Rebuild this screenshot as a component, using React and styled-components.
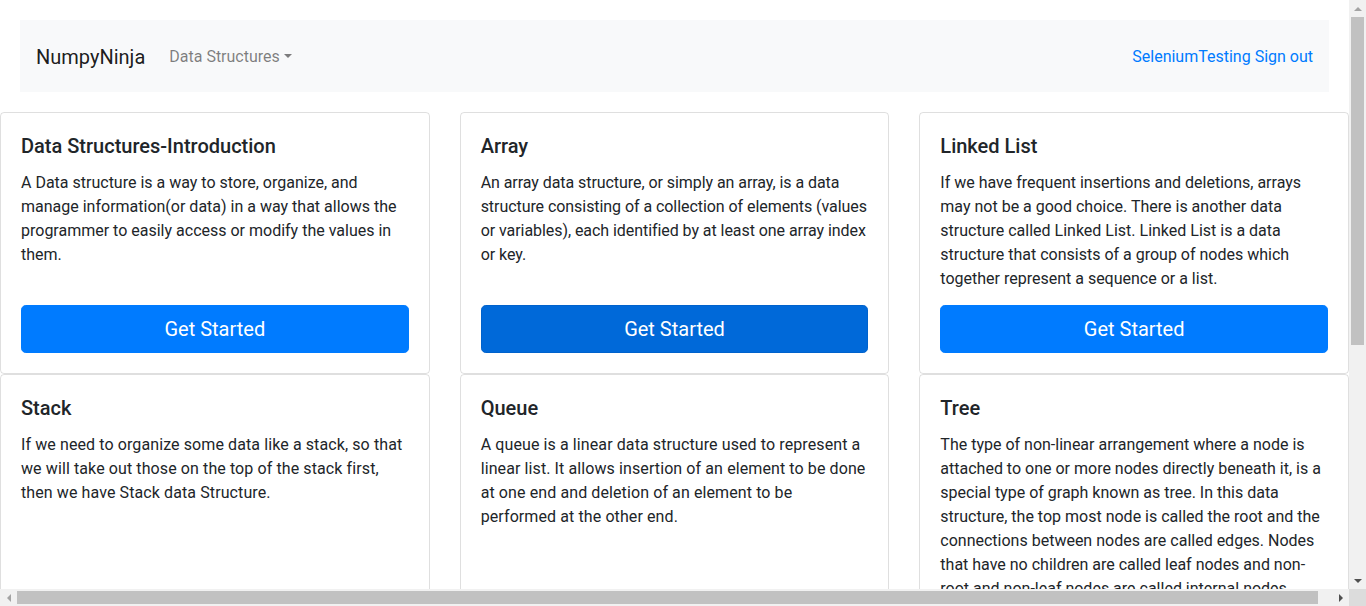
import { styled, createGlobalStyle } from "styled-components";

const Global = createGlobalStyle`
  html, body {
    margin: 0;
    overflow: hidden;
  }
  body {
    font-family: Roboto, "Liberation Sans", sans-serif;
    font-size: 16px;
    line-height: 1.5;
    color: #212529;
    background: #fff;
  }
`;

// spacing: small per-card letter-spacing so lines wrap as in the original font
const topics = [
  {
    title: "Data Structures-Introduction",
    text: "A Data structure is a way to store, organize, and manage information(or data) in a way that allows the programmer to easily access or modify the values in them.",
  },
  {
    title: "Array",
    text: "An array data structure, or simply an array, is a data structure consisting of a collection of elements (values or variables), each identified by at least one array index or key.",
    hover: true,
    spacing: -0.06,
  },
  {
    title: "Linked List",
    text: "If we have frequent insertions and deletions, arrays may not be a good choice. There is another data structure called Linked List. Linked List is a data structure that consists of a group of nodes which together represent a sequence or a list.",
  },
  {
    title: "Stack",
    text: "If we need to organize some data like a stack, so that we will take out those on the top of the stack first, then we have Stack data Structure.",
    spacing: 0.1,
  },
  {
    title: "Queue",
    text: "A queue is a linear data structure used to represent a linear list. It allows insertion of an element to be done at one end and deletion of an element to be performed at the other end.",
    spacing: 0.1,
  },
  {
    title: "Tree",
    text: "The type of non-linear arrangement where a node is attached to one or more nodes directly beneath it, is a special type of graph known as tree. In this data structure, the top most node is called the root and the connections between nodes are called edges. Nodes that have no children are called leaf nodes and non-root and non-leaf nodes are called internal nodes.",
  },
  {
    title: "Graph",
    text: "A graph is a nonlinear data structure that consists of vertices (nodes) and edges. The edges connect pairs of vertices and may be directed or undirected.",
  },
];

export default function App() {
  return (
    <>
      <Global />
      <Frame>
        <Viewport>
          <Navbar>
            <Brand>NumpyNinja</Brand>
            <Dropdown>Data Structures</Dropdown>
            <Right>
              <NavLink>SeleniumTesting</NavLink> <NavLink>Sign out</NavLink>
            </Right>
          </Navbar>
          <Grid>
            {topics.map((t) => (
              <Card key={t.title}>
                <Title>{t.title}</Title>
                <Text $spacing={t.spacing || 0}>{t.text}</Text>
                <Button $hover={t.hover}>Get Started</Button>
              </Card>
            ))}
          </Grid>
        </Viewport>
        <VBar>
          <ArrowBox>
            <Arrow $dir="up" />
          </ArrowBox>
          <VTrack>
            <VThumb />
          </VTrack>
          <ArrowBox>
            <Arrow $dir="down" $dark />
          </ArrowBox>
        </VBar>
        <HBar>
          <ArrowBox>
            <Arrow $dir="left" />
          </ArrowBox>
          <HTrack>
            <HThumb />
          </HTrack>
          <ArrowBox>
            <Arrow $dir="right" $dark />
          </ArrowBox>
        </HBar>
        <Corner />
      </Frame>
    </>
  );
}

const Frame = styled.div`
  width: 100vw;
  height: 100vh;
  display: grid;
  grid-template-columns: 1fr 17px;
  grid-template-rows: 1fr 17px;
`;

const Viewport = styled.div`
  overflow: hidden;
  min-width: 0;
  min-height: 0;
`;

const VBar = styled.div`
  background: #f1f1f1;
  display: flex;
  flex-direction: column;
`;

const HBar = styled.div`
  background: #f1f1f1;
  display: flex;
`;

const Corner = styled.div`
  background: #dcdcdc;
`;

const ArrowBox = styled.div`
  flex: 0 0 17px;
  width: 17px;
  height: 17px;
  display: flex;
  align-items: center;
  justify-content: center;
`;

const arrowColor = (p) => (p.$dark ? "#505050" : "#a3a3a3");

const Arrow = styled.span`
  width: 0;
  height: 0;
  ${(p) =>
    p.$dir === "up"
      ? `border-left: 4px solid transparent; border-right: 4px solid transparent; border-bottom: 4px solid ${arrowColor(p)};`
      : p.$dir === "down"
      ? `border-left: 4px solid transparent; border-right: 4px solid transparent; border-top: 4px solid ${arrowColor(p)};`
      : p.$dir === "left"
      ? `border-top: 4px solid transparent; border-bottom: 4px solid transparent; border-right: 4px solid ${arrowColor(p)};`
      : `border-top: 4px solid transparent; border-bottom: 4px solid transparent; border-left: 4px solid ${arrowColor(p)};`}
`;

const VTrack = styled.div`
  flex: 1;
  padding: 0 2px;
`;

const VThumb = styled.div`
  height: 328px;
  background: #c1c1c1;
`;

const HTrack = styled.div`
  flex: 1;
  padding: 2px 0;
`;

const HThumb = styled.div`
  width: 1301px;
  height: 100%;
  background: #c1c1c1;
`;

const Navbar = styled.nav`
  margin: 20px;
  padding: 16px;
  background: #f8f9fa;
  display: flex;
  align-items: center;
`;

const Brand = styled.a`
  font-size: 20px;
  line-height: 30px;
  padding: 6px 0 4px;
  margin-right: 16px;
  color: rgba(0, 0, 0, 0.9);
`;

const Dropdown = styled.a`
  padding: 9px 8px 7px;
  color: rgba(0, 0, 0, 0.5);
  &::after {
    content: "";
    display: inline-block;
    margin-left: 0.255em;
    vertical-align: 0.255em;
    border-top: 0.3em solid;
    border-right: 0.3em solid transparent;
    border-left: 0.3em solid transparent;
    border-bottom: 0;
  }
`;

const Right = styled.div`
  margin-left: auto;
  padding-top: 2px;
  color: #007bff;
`;

const NavLink = styled.a`
  color: #007bff;
`;

const Grid = styled.div`
  width: calc(100% + 15px);
  box-sizing: border-box;
  padding-right: 15px;
  display: grid;
  grid-template-columns: repeat(3, 1fr);
  column-gap: 30px;
  padding-bottom: 40px;
`;

const Card = styled.div`
  border: 1px solid rgba(0, 0, 0, 0.125);
  border-radius: 4px;
  padding: 20px;
  display: flex;
  flex-direction: column;
  min-width: 0;
`;

const Title = styled.h5`
  margin: 0 0 13px;
  padding-top: 1px;
  font-size: 20px;
  font-weight: 500;
  line-height: 1.2;
`;

const Text = styled.p`
  margin: 0 0 14px;
  letter-spacing: ${(p) => p.$spacing}px;
`;

const Button = styled.button`
  margin-top: auto;
  display: block;
  width: 100%;
  padding: 8px 16px;
  font-family: inherit;
  font-size: 20px;
  line-height: 1.5;
  color: #fff;
  background: ${(p) => (p.$hover ? "#0069d9" : "#007bff")};
  border: 1px solid ${(p) => (p.$hover ? "#0062cc" : "#007bff")};
  border-radius: 4.8px;
  cursor: pointer;
`;
